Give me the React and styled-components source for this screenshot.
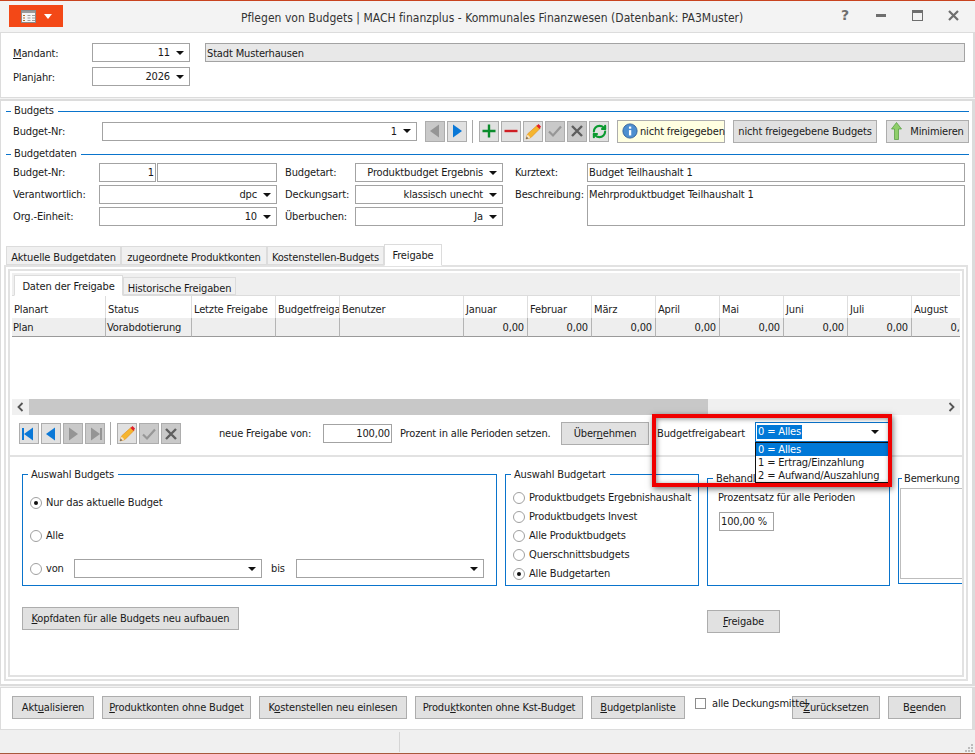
import React from "react";
import styled, { createGlobalStyle } from "styled-components";
import { RefreshCw } from "lucide-react";

const GlobalStyle = createGlobalStyle`
  html, body { margin: 0; padding: 0; background: #f3f3f3; }
  * { box-sizing: border-box; }
  body {
    font-family: "DejaVu Sans Condensed", "Liberation Sans", Arial, sans-serif;
    font-size: 11px;
    letter-spacing: -0.15px;
    color: #1a1a1a;
  }
`;

const FIELD_BORDER = "#a3a3a3";
const BLUE = "#0a74cc";

const Window = styled.div`
  position: relative;
  width: 975px;
  height: 754px;
  overflow: hidden;
  display: flex;
  flex-direction: column;
  background: #f3f3f3;
  border-top: 1px solid #c8431f;
  border-bottom: 1px solid #a8583c;
`;

const TitleBar = styled.div`
  height: 31px;
  flex: none;
  display: flex;
  align-items: flex-start;
  padding: 4px 4px 0 9px;
`;

const MenuButton = styled.div`
  width: 54px;
  height: 22px;
  background: #f34817;
  display: flex;
  align-items: center;
  gap: 8px;
  padding-left: 12px;
`;

const DropArrowWhite = styled.span`
  width: 0;
  height: 0;
  border-left: 4px solid transparent;
  border-right: 4px solid transparent;
  border-top: 5px solid #fff;
`;

const Title = styled.div`
  flex: 1;
  padding: 6px 0 0 178px;
  font-size: 12px;
  letter-spacing: 0.02px;
  color: #333;
  white-space: nowrap;
`;

const WinControls = styled.div`
  display: flex;
  width: 144px;
  flex: none;
`;

const WinControl = styled.div`
  width: 36px;
  height: 20px;
  display: flex;
  align-items: center;
  justify-content: center;
  color: #6e6e6e;
  font: bold 14px "DejaVu Sans", sans-serif;
`;

const HeaderPanel = styled.div`
  height: 66px;
  flex: none;
  background: #fff;
  border: solid #dcdcdc;
  border-width: 1px 2px 1px 1px;
  padding: 10px 0 0 12px;
  display: grid;
  grid-template-columns: 79px 98px 15px 760px;
  grid-auto-rows: 19px;
  row-gap: 5px;
  align-items: center;
`;

const MainPanel = styled.div`
  height: 587px;
  margin-top: 1px;
  flex: none;
  background: #fff;
  border: solid #dcdcdc;
  border-width: 2px 3px 2px 1px;
  padding-top: 3px;
`;

const SectionHead = styled.div`
  display: flex;
  align-items: center;
  height: 14px;
  padding-left: 5px;
  line-height: 14px;
  color: #222;
  margin-top: ${(p) => p.$mt || "0"};
  &::before {
    content: "";
    width: 5px;
    height: 1px;
    margin-right: 3px;
    background: ${BLUE};
  }
  &::after {
    content: "";
    flex: 1;
    height: 1px;
    margin: 0 3px 0 4px;
    background: ${BLUE};
  }
`;

const BudgetRow = styled.div`
  display: flex;
  align-items: center;
  height: 24px;
  margin-top: 1px;
  padding-left: 12px;
`;

const Label = styled.span`
  width: ${(p) => p.$w || "auto"};
  flex: none;
  white-space: nowrap;
  margin-left: ${(p) => p.$ml || "0"};
`;

const HeaderLabel = styled(Label)`
  padding-top: 2px;
`;

const Field = styled.div`
  width: ${(p) => p.$w || "auto"};
  height: ${(p) => p.$h || "19px"};
  flex: none;
  border: 1px solid ${FIELD_BORDER};
  background: #fff;
  display: flex;
  align-items: ${(p) => (p.$top ? "flex-start" : "center")};
  justify-content: ${(p) => (p.$right ? "flex-end" : "flex-start")};
  padding: ${(p) => (p.$top ? "2px" : "0")} 1px 0;
  margin: ${(p) => p.$m || "0"};
  white-space: nowrap;
  overflow: hidden;
`;

const GreyField = styled(Field)`
  background: #e8e8e8;
  padding-top: 2px;
`;

const Select = styled(Field)`
  justify-content: flex-end;
  gap: 6px;
  padding-right: 5px;
`;

const DownArrow = styled.span`
  width: 0;
  height: 0;
  flex: none;
  border-left: 4px solid transparent;
  border-right: 4px solid transparent;
  border-top: 4px solid #111;
`;

const IconBtn = styled.div`
  width: 20px;
  height: 21px;
  flex: none;
  display: flex;
  align-items: center;
  justify-content: center;
  border: 1px solid #adadad;
  background: ${(p) => (p.$off ? "#c9c9c9" : "#e1e1e1")};
  margin-right: 2px;
  margin-left: ${(p) => p.$ml || "0"};
`;

const Sep = styled.span`
  width: 1px;
  height: 23px;
  flex: none;
  background: #a8a8a8;
  margin: 0 6px 0 3px;
`;

const Btn = styled.div`
  width: ${(p) => p.$w};
  height: 23px;
  flex: none;
  display: flex;
  align-items: center;
  justify-content: center;
  gap: 8px;
  border: 1px solid #adadad;
  background: #e1e1e1;
  white-space: nowrap;
  margin-left: ${(p) => p.$ml || "0"};
  margin-top: ${(p) => p.$mt || "0"};
`;

const InfoBox = styled(Btn)`
  background: #ffffe1;
  gap: 2px;
  justify-content: flex-start;
  padding-left: 4px;
`;

const DataBlock = styled.div`
  display: flex;
  padding: 0 0 0 12px;
  margin-top: 2px;
`;

const FormCol = styled.div`
  display: grid;
  grid-template-columns: ${(p) => p.$cols};
  grid-auto-rows: 19px;
  row-gap: 3px;
  align-items: center;
  margin-right: ${(p) => p.$mr || "0"};
`;

const PairField = styled.div`
  display: flex;
  gap: 1px;
`;

const DescField = styled(Field)`
  grid-row: span 2;
  align-self: start;
`;

const TabBar = styled.div`
  display: flex;
  align-items: flex-end;
  height: 21px;
  margin: 18px 0 0 5px;
`;

const Tab = styled.div`
  height: ${(p) => (p.$active ? "22px" : "19px")};
  width: ${(p) => p.$w};
  flex: none;
  display: flex;
  align-items: center;
  justify-content: center;
  white-space: nowrap;
  background: ${(p) => (p.$active ? "#fff" : "#f0f0f0")};
  border: 1px solid #dcdcdc;
  border-bottom: ${(p) => (p.$active ? "1px solid #fff" : "1px solid #dcdcdc")};
  padding-top: ${(p) => (p.$active ? "1px" : "4px")};
  margin-bottom: ${(p) => (p.$active ? "-1px" : "0")};
  position: relative;
`;

const OuterTabPanel = styled.div`
  width: 964px;
  height: 416px;
  margin-left: 3px;
  border: 2px solid #e2e2e2;
  padding: 2px;
`;

const InnerPanel = styled.div`
  height: 100%;
  border: 2px solid #e2e2e2;
  display: flex;
  flex-direction: column;
  overflow: hidden;
`;

const UpperArea = styled.div`
  height: 186px;
  flex: none;
  padding: 2px 2px 0 2px;
  border-bottom: 2px solid #e2e2e2;
`;

const SubTabBar = styled.div`
  display: flex;
  align-items: flex-end;
  height: 23px;
  padding-left: 2px;
  background: #efefef;
  border-bottom: 1px solid #dcdcdc;
`;

const SubTab = styled(Tab)`
  height: ${(p) => (p.$active ? "21px" : "18px")};
  background: ${(p) => (p.$active ? "#fff" : "#f0f0f0")};
`;

const TableClip = styled.div`
  height: 103px;
  overflow: hidden;
`;

const TableGrid = styled.div`
  display: grid;
  width: 963px;
  grid-template-columns: 93px 86px 84px 64px 124px repeat(8, 64px);
  grid-template-rows: 22px 19px;
`;

const HeadCell = styled.div`
  border-left: ${(p) => (p.$first ? "none" : "1px solid #dedede")};
  padding: 7px 0 0 2px;
  white-space: nowrap;
  overflow: hidden;
  color: #222;
`;

const BodyCell = styled.div`
  background: #eeeeee;
  border-left: ${(p) => (p.$first ? "none" : "1px solid #b4b4b4")};
  border-bottom: 1px solid #9a9a9a;
  padding: 3px 3px 0 1px;
  text-align: ${(p) => (p.$right ? "right" : "left")};
  white-space: nowrap;
  overflow: hidden;
`;

const Scrollbar = styled.div`
  display: flex;
  align-items: stretch;
  height: 16px;
  background: #f0f0f0;
`;

const ScrollEnd = styled.div`
  width: 17px;
  flex: none;
  display: flex;
  align-items: center;
  justify-content: center;
`;

const ScrollThumb = styled.div`
  width: 679px;
  flex: none;
  background: #c8c8c8;
`;

const ScrollRest = styled.div`
  flex: 1;
`;

const Toolbar = styled.div`
  display: flex;
  align-items: center;
  height: 23px;
  margin-top: 7px;
  padding-left: 7px;
`;

const ToolText = styled.span`
  width: ${(p) => p.$w || "auto"};
  flex: none;
  white-space: nowrap;
  margin-left: ${(p) => p.$ml || "0"};
`;

const LowerArea = styled.div`
  flex: 1;
  position: relative;
  padding: 10px 0 0 12px;
`;

const Groups = styled.div`
  display: flex;
  gap: 8px;
  align-items: flex-start;
  width: 1000px;
`;

const Group = styled.fieldset`
  width: ${(p) => p.$w};
  height: ${(p) => p.$h};
  margin: ${(p) => p.$mt || "0"} 0 0;
  padding: 0;
  min-width: 0;
  flex: none;
  border: 1px solid ${BLUE};
  display: flex;
  flex-direction: column;
`;

const Legend = styled.legend`
  margin-left: ${(p) => p.$ml || "5px"};
  padding: ${(p) => p.$p || "0 4px 0 3px"};
  height: 14px;
  line-height: 16px;
  white-space: nowrap;
  color: #222;
`;

const RadioRow = styled.div`
  display: flex;
  align-items: center;
  height: ${(p) => p.$h};
  padding-left: 7px;
  white-space: nowrap;
`;

const Radio = styled.span`
  width: 12px;
  height: 12px;
  flex: none;
  border-radius: 50%;
  border: 1px solid #a0a0a0;
  background: #fff;
  margin-right: 4px;
  display: flex;
  align-items: center;
  justify-content: center;
  &::after {
    content: "";
    width: 4px;
    height: 4px;
    border-radius: 50%;
    background: ${(p) => (p.$on ? "#111" : "transparent")};
  }
`;

const GroupBody = styled.div`
  padding: ${(p) => p.$p};
  display: flex;
  flex-direction: column;
`;

const NoteBox = styled.div`
  width: 80px;
  height: 91px;
  margin: 3px 0 0 1px;
  border: 1px solid #bdbdbd;
`;

const LowerRow = styled.div`
  display: flex;
  margin-top: 21px;
`;

const FooterPanel = styled.div`
  height: 43px;
  margin-top: 1px;
  flex: none;
  background: #fff;
  border: solid #dcdcdc;
  border-width: 1px 3px 1px 1px;
  padding: 8px 0 0 11px;
  display: flex;
  gap: 8px;
`;

const CheckWrap = styled.div`
  display: flex;
  gap: 6px;
  width: 89px;
  flex: none;
  margin: 1px 0 0 2px;
  white-space: nowrap;
  position: relative;
`;

const Checkbox = styled.span`
  width: 11px;
  height: 11px;
  flex: none;
  margin-top: 1px;
  border: 1px solid #8c8c8c;
  background: #fff;
`;

const StatusBar = styled.div`
  flex: 1;
  display: flex;
  justify-content: space-between;
  align-items: stretch;
  padding: 2px 2px 1px 399px;
  background: #f0f0f0;
`;

const StatusCell = styled.div`
  width: 1px;
  background: #d5d5d5;
`;

const Grip = styled.svg`
  align-self: flex-end;
`;

const Annotation = styled.div`
  position: absolute;
  left: 652px;
  top: 413px;
  width: 240px;
  height: 73px;
  border: 4px solid #f00000;
  box-shadow: 1px 2px 6px rgba(0, 0, 0, 0.55), inset 1px 1px 5px rgba(0, 0, 0, 0.45);
  pointer-events: none;
  z-index: 3;
`;

const ComboBox = styled.div`
  position: absolute;
  left: 755px;
  top: 421px;
  width: 134px;
  height: 20px;
  border: 1px solid ${BLUE};
  background: #fff;
  display: flex;
  align-items: center;
  justify-content: space-between;
  padding: 0 9px 0 1px;
  z-index: 2;
`;

const ComboValue = styled.span`
  background: #0078d7;
  color: #fff;
  padding: 0 1px;
  line-height: 14px;
`;

const DropList = styled.div`
  position: absolute;
  left: 755px;
  top: 441px;
  width: 134px;
  height: 41px;
  border: 1px solid #111;
  background: #fff;
  z-index: 2;
`;

const DropItem = styled.div`
  height: 13px;
  line-height: 13px;
  padding-left: 2px;
  white-space: nowrap;
  background: ${(p) => (p.$sel ? "#0078d7" : "transparent")};
  color: ${(p) => (p.$sel ? "#fff" : "#1a1a1a")};
`;

const Mn = styled.u`
  text-underline-offset: 1px;
`;

const InfoSvg = styled.svg`
  flex: none;
`;

const TableIcon = () => (
  <svg width="15" height="13" viewBox="0 0 15 13">
    <rect x="0.5" y="0.5" width="14" height="12" fill="#f4f4f4" stroke="#8a8a8a" />
    <rect x="1" y="1" width="13" height="2" fill="#9a9a9a" />
    {[5, 7.5, 10].map((y) =>
      [2, 6.5, 11].map((x, i) => (
        <rect key={`${x}-${y}`} x={x} y={y} width={i === 0 ? 2 : 3} height="1" fill={i === 0 ? "#b0702a" : "#9c9c9c"} />
      ))
    )}
  </svg>
);

const Arrow = ({ dir, color, stop }) => (
  <svg width="16" height="16" viewBox="0 0 16 16">
    {dir === "left" ? (
      <polygon points="3,8 12,1.5 12,14.5" fill={color} />
    ) : (
      <polygon points="13,8 4,1.5 4,14.5" fill={color} />
    )}
    {stop && <rect x={dir === "left" ? 1 : 13} y="2" width="2" height="12" fill={color} />}
  </svg>
);

const PlusIcon = () => (
  <svg width="14" height="14" viewBox="0 0 14 14">
    <path d="M7 0.5v13M0.5 7h13" stroke="#0b8c2c" strokeWidth="2.4" />
  </svg>
);

const MinusIcon = () => (
  <svg width="14" height="14" viewBox="0 0 14 14">
    <path d="M0.5 7h13" stroke="#cf1f25" strokeWidth="2.4" />
  </svg>
);

const PencilIcon = () => (
  <svg width="17" height="17" viewBox="0 0 17 17">
    <polygon points="1,16 2.5,11 12,2.5 15,5.5 6,14.5" fill="#f5b52e" stroke="#e08a18" strokeWidth="0.6" />
    <polygon points="1,16 2.5,11.5 5.5,14.5" fill="#f7e3c2" />
    <polygon points="1,16 1.8,13.8 3.2,15.2" fill="#444" />
    <polygon points="11.5,3 13.5,1 16,3.5 14.5,6" fill="#e0202a" />
  </svg>
);

const CheckIcon = () => (
  <svg width="16" height="14" viewBox="0 0 16 14">
    <path d="M2 7.5l4 4 8-9" fill="none" stroke="#979797" strokeWidth="2.2" />
  </svg>
);

const CrossIcon = () => (
  <svg width="12" height="12" viewBox="0 0 12 12">
    <path d="M1 1l10 10M11 1L1 11" stroke="#5e5e5e" strokeWidth="2.4" />
  </svg>
);

const InfoIcon = () => (
  <InfoSvg width="16" height="16" viewBox="0 0 18 18">
    <circle cx="9" cy="9" r="8" fill="#4d8fd0" stroke="#2f5f99" />
    <rect x="7.8" y="8" width="2.6" height="6" fill="#fff" />
    <rect x="7.8" y="4" width="2.6" height="2.4" fill="#fff" />
  </InfoSvg>
);

const UpIcon = () => (
  <svg width="11" height="18" viewBox="0 0 11 18">
    <polygon points="5.5,0.5 10.5,7 7.5,7 7.5,17.5 3.5,17.5 3.5,7 0.5,7" fill="#8fce6a" stroke="#4f9a3a" strokeWidth="0.7" />
  </svg>
);

const Months = ["Januar", "Februar", "März", "April", "Mai", "Juni", "Juli", "August"];

const App = () => {
  return (
    <Window>
      <GlobalStyle />
      <TitleBar>
        <MenuButton>
          <TableIcon />
          <DropArrowWhite />
        </MenuButton>
        <Title>Pflegen von Budgets | MACH finanzplus - Kommunales Finanzwesen (Datenbank: PA3Muster)</Title>
        <WinControls>
          <WinControl>?</WinControl>
          <WinControl>
            <svg width="10" height="3"><rect width="10" height="3" fill="#6e6e6e" /></svg>
          </WinControl>
          <WinControl>
            <svg width="11" height="11" viewBox="0 0 11 11">
              <rect x="0.5" y="0.5" width="10" height="10" fill="none" stroke="#6e6e6e" />
              <rect x="0" y="0" width="11" height="3" fill="#6e6e6e" />
            </svg>
          </WinControl>
          <WinControl>
            <svg width="11" height="11" viewBox="0 0 11 11">
              <path d="M1 1l9 9M10 1l-9 9" stroke="#6e6e6e" strokeWidth="2.2" />
            </svg>
          </WinControl>
        </WinControls>
      </TitleBar>

      <HeaderPanel>
        <HeaderLabel><Mn>M</Mn>andant:</HeaderLabel>
        <Select $w="98px">11 <DownArrow /></Select>
        <span />
        <GreyField $w="760px">Stadt Musterhausen</GreyField>
        <HeaderLabel>Plan<Mn>j</Mn>ahr:</HeaderLabel>
        <Select $w="98px">2026 <DownArrow /></Select>
      </HeaderPanel>

      <MainPanel>
        <SectionHead>Budgets</SectionHead>
        <BudgetRow>
          <Label $w="89px">Budget-Nr:</Label>
          <Select $w="315px">1 <DownArrow /></Select>
          <IconBtn $off $ml="8px"><Arrow dir="left" color="#959595" /></IconBtn>
          <IconBtn><Arrow dir="right" color="#0a78d7" /></IconBtn>
          <Sep />
          <IconBtn><PlusIcon /></IconBtn>
          <IconBtn><MinusIcon /></IconBtn>
          <IconBtn><PencilIcon /></IconBtn>
          <IconBtn $off><CheckIcon /></IconBtn>
          <IconBtn $off><CrossIcon /></IconBtn>
          <IconBtn><RefreshCw size={15} strokeWidth={3.4} color="#0b9a30" /></IconBtn>
          <InfoBox $w="108px" $ml="6px">
            <InfoIcon />
            nicht freigegeben
          </InfoBox>
          <Btn $w="144px" $ml="8px">nicht freigegebene Budgets</Btn>
          <Btn $w="83px" $ml="9px">
            <UpIcon />
            Minimieren
          </Btn>
        </BudgetRow>

        <SectionHead $mt="4px">Budgetdaten</SectionHead>
        <DataBlock>
          <FormCol $cols="86px 178px" $mr="8px">
            <Label>Budget-Nr:</Label>
            <PairField>
              <Field $w="57px" $right>1</Field>
              <Field $w="120px" />
            </PairField>
            <Label>Verantwortlich:</Label>
            <Select $w="178px">dpc <DownArrow /></Select>
            <Label>Org.-Einheit:</Label>
            <Select $w="178px">10 <DownArrow /></Select>
          </FormCol>
          <FormCol $cols="70px 148px" $mr="12px">
            <Label>Budgetart:</Label>
            <Select $w="148px">Produktbudget Ergebnis <DownArrow /></Select>
            <Label>Deckungsart:</Label>
            <Select $w="148px">klassisch unecht <DownArrow /></Select>
            <Label>Überbuchen:</Label>
            <Select $w="148px">Ja <DownArrow /></Select>
          </FormCol>
          <FormCol $cols="72px 378px">
            <Label>Kurztext:</Label>
            <Field $w="378px">Budget Teilhaushalt 1</Field>
            <Label>Beschreibung:</Label>
            <DescField $w="378px" $h="41px" $top>Mehrproduktbudget Teilhaushalt 1</DescField>
          </FormCol>
        </DataBlock>

        <TabBar>
          <Tab $w="115px">Aktuelle Budgetdaten</Tab>
          <Tab $w="146px">zugeordnete Produktkonten</Tab>
          <Tab $w="117px">Kostenstellen-Budgets</Tab>
          <Tab $w="58px" $active>Freigabe</Tab>
        </TabBar>
        <OuterTabPanel>
          <InnerPanel>
            <UpperArea>
              <SubTabBar>
                <SubTab $w="109px" $active>Daten der Freigabe</SubTab>
                <SubTab $w="113px">Historische Freigaben</SubTab>
              </SubTabBar>
              <TableClip>
                <TableGrid>
                  <HeadCell $first>Planart</HeadCell>
                  <HeadCell>Status</HeadCell>
                  <HeadCell>Letzte Freigabe</HeadCell>
                  <HeadCell>Budgetfreigabe</HeadCell>
                  <HeadCell>Benutzer</HeadCell>
                  {Months.map((m) => (
                    <HeadCell key={m}>{m}</HeadCell>
                  ))}
                  <BodyCell $first>Plan</BodyCell>
                  <BodyCell>Vorabdotierung</BodyCell>
                  <BodyCell />
                  <BodyCell />
                  <BodyCell />
                  {Months.map((m) => (
                    <BodyCell key={m} $right>0,00</BodyCell>
                  ))}
                </TableGrid>
              </TableClip>
              <Scrollbar>
                <ScrollEnd>
                  <svg width="7" height="10" viewBox="0 0 7 10">
                    <path d="M5.5 1l-4 4 4 4" fill="none" stroke="#555" strokeWidth="1.8" />
                  </svg>
                </ScrollEnd>
                <ScrollThumb />
                <ScrollRest />
                <ScrollEnd>
                  <svg width="7" height="10" viewBox="0 0 7 10">
                    <path d="M1.5 1l4 4-4 4" fill="none" stroke="#555" strokeWidth="1.8" />
                  </svg>
                </ScrollEnd>
              </Scrollbar>
              <Toolbar>
                <IconBtn><Arrow dir="left" color="#0a78d7" stop /></IconBtn>
                <IconBtn><Arrow dir="left" color="#0a78d7" /></IconBtn>
                <IconBtn $off><Arrow dir="right" color="#959595" /></IconBtn>
                <IconBtn $off><Arrow dir="right" color="#959595" stop /></IconBtn>
                <Sep />
                <IconBtn><PencilIcon /></IconBtn>
                <IconBtn $off><CheckIcon /></IconBtn>
                <IconBtn $off><CrossIcon /></IconBtn>
                <ToolText $w="104px" $ml="36px">neue Freigabe von:</ToolText>
                <Field $w="69px" $right>100,00</Field>
                <ToolText $w="161px" $ml="8px">Prozent in alle Perioden setzen.</ToolText>
                <Btn $w="88px"><span>Über<Mn>n</Mn>ehmen</span></Btn>
                <ToolText $ml="8px">Budgetfreigabeart</ToolText>
              </Toolbar>
            </UpperArea>
            <LowerArea>
              <Groups>
                <Group $w="475px" $h="119px">
                  <Legend>Auswahl Budgets</Legend>
                  <GroupBody $p="5px 0 0 0">
                    <RadioRow $h="33px"><Radio $on />Nur das aktuelle Budget</RadioRow>
                    <RadioRow $h="33px"><Radio />Alle</RadioRow>
                    <RadioRow $h="33px">
                      <Radio />
                      <Label $w="28px">von</Label>
                      <Select $w="188px"><DownArrow /></Select>
                      <Label $w="25px" $ml="9px">bis</Label>
                      <Select $w="188px"><DownArrow /></Select>
                    </RadioRow>
                  </GroupBody>
                </Group>
                <Group $w="194px" $h="119px">
                  <Legend>Auswahl Budgetart</Legend>
                  <GroupBody $p="7px 0 0 0">
                    <RadioRow $h="19px"><Radio />Produktbudgets Ergebnishaushalt</RadioRow>
                    <RadioRow $h="19px"><Radio />Produktbudgets Invest</RadioRow>
                    <RadioRow $h="19px"><Radio />Alle Produktbudgets</RadioRow>
                    <RadioRow $h="19px"><Radio />Querschnittsbudgets</RadioRow>
                    <RadioRow $h="19px"><Radio $on />Alle Budgetarten</RadioRow>
                  </GroupBody>
                </Group>
                <Group $w="183px" $h="115px" $mt="4px">
                  <Legend>Behandlung der Freigabebeträge</Legend>
                  <GroupBody $p="6px 0 0 10px">
                    <span>Prozentsatz für alle Perioden</span>
                    <Field $w="55px" $m="8px 0 0 1px">100,00 %</Field>
                  </GroupBody>
                </Group>
                <Group $w="90px" $h="113px" $mt="4px">
                  <Legend $ml="3px" $p="0 1px 0 2px">Bemerkung zur Freigabe</Legend>
                  <NoteBox />
                </Group>
              </Groups>
              <LowerRow>
                <Btn $w="217px"><span><Mn>K</Mn>opfdaten für alle Budgets neu aufbauen</span></Btn>
                <Btn $w="73px" $ml="468px" $mt="3px"><span><Mn>F</Mn>reigabe</span></Btn>
              </LowerRow>
            </LowerArea>
          </InnerPanel>
        </OuterTabPanel>
      </MainPanel>

      <FooterPanel>
        <Btn $w="82px"><span>Akt<Mn>u</Mn>alisieren</span></Btn>
        <Btn $w="149px"><span><Mn>P</Mn>roduktkonten ohne Budget</span></Btn>
        <Btn $w="148px"><span>K<Mn>o</Mn>stenstellen neu einlesen</span></Btn>
        <Btn $w="168px"><span>Produ<Mn>k</Mn>tkonten ohne Kst-Budget</span></Btn>
        <Btn $w="94px"><span><Mn>B</Mn>udgetplanliste</span></Btn>
        <CheckWrap>
          <Checkbox />
          alle Deckungsmittel
        </CheckWrap>
        <Btn $w="88px"><span><Mn>Z</Mn>urücksetzen</span></Btn>
        <Btn $w="73px"><span>B<Mn>e</Mn>enden</span></Btn>
      </FooterPanel>

      <StatusBar>
        <StatusCell />
        <Grip width="9" height="9" viewBox="0 0 9 9">
          <path d="M7 1h2v2H7zM4 4h2v2H4zM7 4h2v2H7zM1 7h2v2H1zM4 7h2v2H4zM7 7h2v2H7z" fill="#bcbcbc" />
        </Grip>
      </StatusBar>

      <ComboBox>
        <ComboValue>0 = Alles</ComboValue>
        <DownArrow />
      </ComboBox>
      <DropList>
        <DropItem $sel>0 = Alles</DropItem>
        <DropItem>1 = Ertrag/Einzahlung</DropItem>
        <DropItem>2 = Aufwand/Auszahlung</DropItem>
      </DropList>
      <Annotation />
    </Window>
  );
};

export default App;
